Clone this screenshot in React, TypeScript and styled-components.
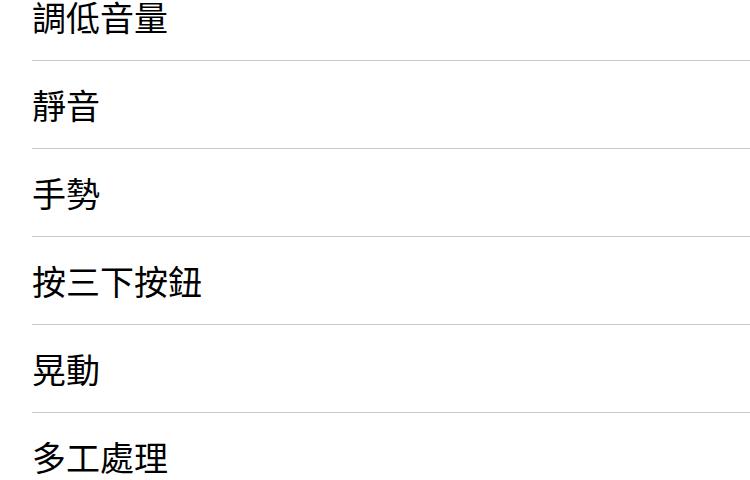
import React from 'react';
import styled, { createGlobalStyle } from 'styled-components';

const GlobalStyle = createGlobalStyle`
  html, body {
    margin: 0;
    padding: 0;
    background: #ffffff;
    overflow: hidden;
  }
`;

const items = ['調低音量', '靜音', '手勢', '按三下按鈕', '晃動', '多工處理'];

export default function App() {
  return (
    <>
      <GlobalStyle />
      <List>
        {items.map((label) => (
          <Row key={label}>
            <Label>{label}</Label>
          </Row>
        ))}
      </List>
    </>
  );
}

const List = styled.ul`
  list-style: none;
  margin: -27px 0 0 0;
  padding: 0 0 0 32px;
  background: #ffffff;
`;

const Row = styled.li`
  height: 88px;
  display: flex;
  align-items: center;
  border-bottom: 1px solid #c8c7cc;
  box-sizing: border-box;
`;

const Label = styled.span`
  font-family: 'Noto Sans CJK TC', 'Noto Sans', sans-serif;
  font-size: 34px;
  color: #000000;
  line-height: 1;
`;
